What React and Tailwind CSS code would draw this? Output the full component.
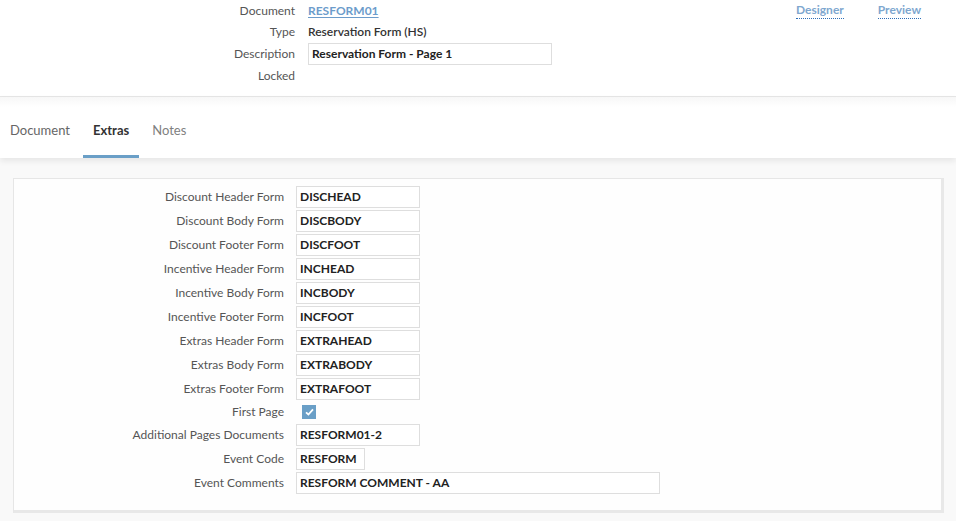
import React from "react";

const font = { fontFamily: "Lato, 'Open Sans', sans-serif" };

const headerRows = [
  { label: "Document", kind: "link", value: "RESFORM01" },
  { label: "Type", kind: "text", value: "Reservation Form (HS)" },
  { label: "Description", kind: "input", value: "Reservation Form - Page 1" },
  { label: "Locked", kind: "empty" },
];

const extras = [
  { label: "Discount Header Form", value: "DISCHEAD", w: "w-[124px]" },
  { label: "Discount Body Form", value: "DISCBODY", w: "w-[124px]" },
  { label: "Discount Footer Form", value: "DISCFOOT", w: "w-[124px]" },
  { label: "Incentive Header Form", value: "INCHEAD", w: "w-[124px]" },
  { label: "Incentive Body Form", value: "INCBODY", w: "w-[124px]" },
  { label: "Incentive Footer Form", value: "INCFOOT", w: "w-[124px]" },
  { label: "Extras Header Form", value: "EXTRAHEAD", w: "w-[124px]" },
  { label: "Extras Body Form", value: "EXTRABODY", w: "w-[124px]" },
  { label: "Extras Footer Form", value: "EXTRAFOOT", w: "w-[124px]" },
  { label: "First Page", check: true },
  { label: "Additional Pages Documents", value: "RESFORM01-2", w: "w-[124px]" },
  { label: "Event Code", value: "RESFORM", w: "w-[69px]" },
  { label: "Event Comments", value: "RESFORM COMMENT - AA", w: "w-[364px]" },
];

const Field = ({ value, w }) => (
  <div
    className={`${w} h-[22px] border border-[#dedede] bg-white pl-[3px] flex items-center text-[12px] font-bold text-[#222]`}
  >
    {value}
  </div>
);

export default function App() {
  return (
    <div style={font} className="w-[956px] h-[521px] bg-[#f9f9f9] overflow-hidden text-[12px]">
      {/* header */}
      <div className="bg-white h-[97px] relative border-b border-[#e6e6e6]">
        <div className="flex flex-col">
          {headerRows.map((r) => (
            <div key={r.label} className="flex items-center h-[22px] first:h-[21px]">
              <div className="w-[295px] text-right text-[#555]">{r.label}</div>
              <div className="ml-[13px]">
                {r.kind === "link" && (
                  <span className="font-bold text-[#6c9ccb] underline underline-offset-2">{r.value}</span>
                )}
                {r.kind === "text" && <span className="font-semibold text-[#333]">{r.value}</span>}
                {r.kind === "input" && <Field value={r.value} w="w-[244px]" />}
              </div>
            </div>
          ))}
        </div>
        <div className="absolute top-[2px] left-[796px] flex gap-[34px] font-bold text-[#7ea7cf]">
          <span className="border-b border-dotted border-[#2f6fb8] leading-[16px]">Designer</span>
          <span className="border-b border-dotted border-[#2f6fb8] leading-[16px]">Preview</span>
        </div>
      </div>

      {/* tabs */}
      <div className="bg-gradient-to-b from-[#f7f7f7] to-white to-[10px] h-[61px] flex items-end shadow-[0_3px_6px_rgba(0,0,0,0.08)] relative">
        <div className="flex gap-[3px] text-[13px]">
          <div className="px-[10px] h-[38px] text-[#666] flex items-start pt-[1px]">Document</div>
          <div className="px-[10px] h-[38px] text-[#333] font-bold border-b-[3px] border-[#6a9fc7] flex items-start pt-[1px]">
            Extras
          </div>
          <div className="px-[10px] h-[38px] text-[#808080] flex items-start pt-[1px]">Notes</div>
        </div>
      </div>

      {/* extras panel */}
      <div className="px-[13px] pt-[20px]">
        <div className="w-[931px] h-[335px] bg-[#fefefe] border-l border-t border-[#e6e6e6] border-r-[3px] border-b-[3px] border-r-[#e8e8e8] border-b-[#e8e8e8] pt-[7px]">
          <div className="flex flex-col gap-[2px]">
            {extras.map((r) => (
              <div key={r.label} className={`flex items-center ${r.check ? "h-[20px]" : "h-[22px]"}`}>
                <div className="w-[270px] text-right text-[#555]">{r.label}</div>
                <div className="ml-[12px]">
                  {r.check ? (
                    <div className="ml-[6px] w-[14px] h-[14px] bg-[#6a9fc7] flex items-center justify-center">
                      <svg width="9" height="8" viewBox="0 0 9 8">
                        <path d="M1 4.3 L3.4 6.5 L8 1.3" stroke="white" strokeWidth="1.8" fill="none" />
                      </svg>
                    </div>
                  ) : (
                    <Field value={r.value} w={r.w} />
                  )}
                </div>
              </div>
            ))}
          </div>
        </div>
      </div>
    </div>
  );
}
